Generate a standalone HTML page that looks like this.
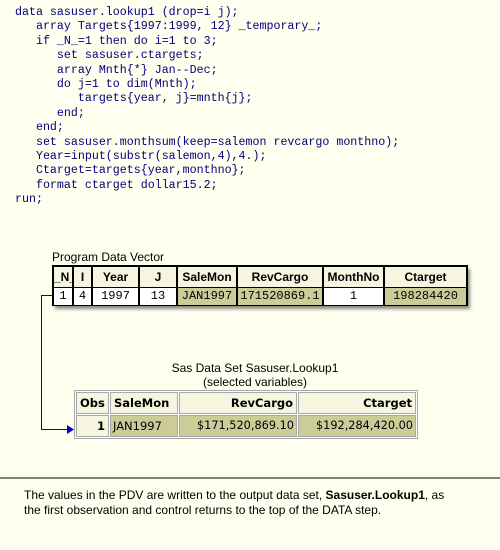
<!DOCTYPE html>
<html><head><meta charset="utf-8"><style>
body{margin:0;width:500px;height:550px;background:#FFFFF0;position:relative;overflow:hidden;font-family:"Liberation Sans",Arial,sans-serif}
.code{position:absolute;left:15px;top:6px;margin:0;font-family:"Liberation Mono",monospace;font-size:11.65px;line-height:14.4px;color:#00007a;white-space:pre}
.c{position:absolute;box-sizing:border-box;text-align:center;font-size:12px;white-space:nowrap;overflow:hidden}
.h{font-weight:bold;background:#F5F5E0;font-family:"Liberation Sans",sans-serif;font-size:12px;line-height:20px}
.d{font-family:"Liberation Mono",monospace;font-size:12px;line-height:17px;background:#fff}
.o{background:#CCCC99}
.t{position:absolute;box-sizing:border-box;border:1px solid #a8a8a8;font-family:"DejaVu Sans",sans-serif;font-size:11.5px;padding:0 3px;white-space:nowrap;line-height:20px}
.th{background:#F5F5E0;font-weight:bold}
.td{background:#CCCC99;padding:0 2px}
</style></head><body>
<pre class="code">data sasuser.lookup1 (drop=i j);
   array Targets{1997:1999, 12} _temporary_;
   if _N_=1 then do i=1 to 3;
      set sasuser.ctargets;
      array Mnth{*} Jan--Dec;
      do j=1 to dim(Mnth);
         targets{year, j}=mnth{j};
      end;
   end;
   set sasuser.monthsum(keep=salemon revcargo monthno);
   Year=input(substr(salemon,4),4.);
   Ctarget=targets{year,monthno};
   format ctarget dollar15.2;
run;</pre>
<div style="position:absolute;left:52px;top:250px;font-size:12px">Program Data Vector</div>
<div style="position:absolute;left:55px;top:269px;width:415px;height:40px;background:#8a8a80;filter:blur(1.5px)"></div>
<div style="position:absolute;left:52px;top:265px;width:416px;height:41px;background:#000"></div>
<div class="c h" style="left:54px;top:267px;width:18px;height:20px">_N_</div>
<div class="c h" style="left:74px;top:267px;width:17px;height:20px">I</div>
<div class="c h" style="left:93px;top:267px;width:45px;height:20px">Year</div>
<div class="c h" style="left:140px;top:267px;width:36px;height:20px">J</div>
<div class="c h" style="left:178px;top:267px;width:58px;height:20px">SaleMon</div>
<div class="c h" style="left:238px;top:267px;width:84px;height:20px">RevCargo</div>
<div class="c h" style="left:324px;top:267px;width:59px;height:20px">MonthNo</div>
<div class="c h" style="left:385px;top:267px;width:81px;height:20px">Ctarget</div>
<div class="c d" style="left:54px;top:288px;width:18px;height:17px">1</div>
<div class="c d" style="left:74px;top:288px;width:17px;height:17px">4</div>
<div class="c d" style="left:93px;top:288px;width:45px;height:17px">1997</div>
<div class="c d" style="left:140px;top:288px;width:36px;height:17px">13</div>
<div class="c d o" style="left:178px;top:288px;width:58px;height:17px">JAN1997</div>
<div class="c d o" style="left:238px;top:288px;width:84px;height:17px">171520869.1</div>
<div class="c d" style="left:324px;top:288px;width:59px;height:17px">1</div>
<div class="c d o" style="left:385px;top:288px;width:81px;height:17px">198284420</div>
<div style="position:absolute;left:0;width:500px;top:361px;text-align:center;font-size:12px;line-height:14px;padding-left:10px;box-sizing:border-box">Sas Data Set Sasuser.Lookup1<br>(selected variables)</div>
<div style="position:absolute;left:74px;top:390px;width:344px;height:49px;border:1px solid #a8a8a8;box-sizing:border-box;background:#fff"></div>
<div class="t th" style="left:76px;top:392px;width:33px;height:22px">Obs</div>
<div class="t th" style="left:110px;top:392px;width:68px;height:22px">SaleMon</div>
<div class="t th" style="left:179px;top:392px;width:118px;height:22px;text-align:right">RevCargo</div>
<div class="t th" style="left:298px;top:392px;width:118px;height:22px;text-align:right">Ctarget</div>
<div class="t th" style="left:76px;top:415px;width:33px;height:22px;text-align:right">1</div>
<div class="t td" style="left:110px;top:415px;width:68px;height:22px">JAN1997</div>
<div class="t td" style="left:179px;top:415px;width:118px;height:22px;text-align:right;font-size:11.3px">$171,520,869.10</div>
<div class="t td" style="left:298px;top:415px;width:118px;height:22px;text-align:right;font-size:11.3px">$192,284,420.00</div>
<svg style="position:absolute;left:0;top:0" width="500" height="550">
<polyline points="52,295.5 41.5,295.5 41.5,429.5 68,429.5" fill="none" stroke="#0000cc" stroke-width="1"/>
<polygon points="67,425 74,429.5 67,434" fill="#0000cc"/>
<line x1="0" y1="478" x2="500" y2="478" stroke="#000" stroke-width="1"/>
</svg>
<div style="position:absolute;left:24px;top:488px;font-size:12px;line-height:15px">The values in the PDV are written to the output data set, <b>Sasuser.Lookup1</b>, as<br>the first observation and control returns to the top of the DATA step.</div>
</body></html>
